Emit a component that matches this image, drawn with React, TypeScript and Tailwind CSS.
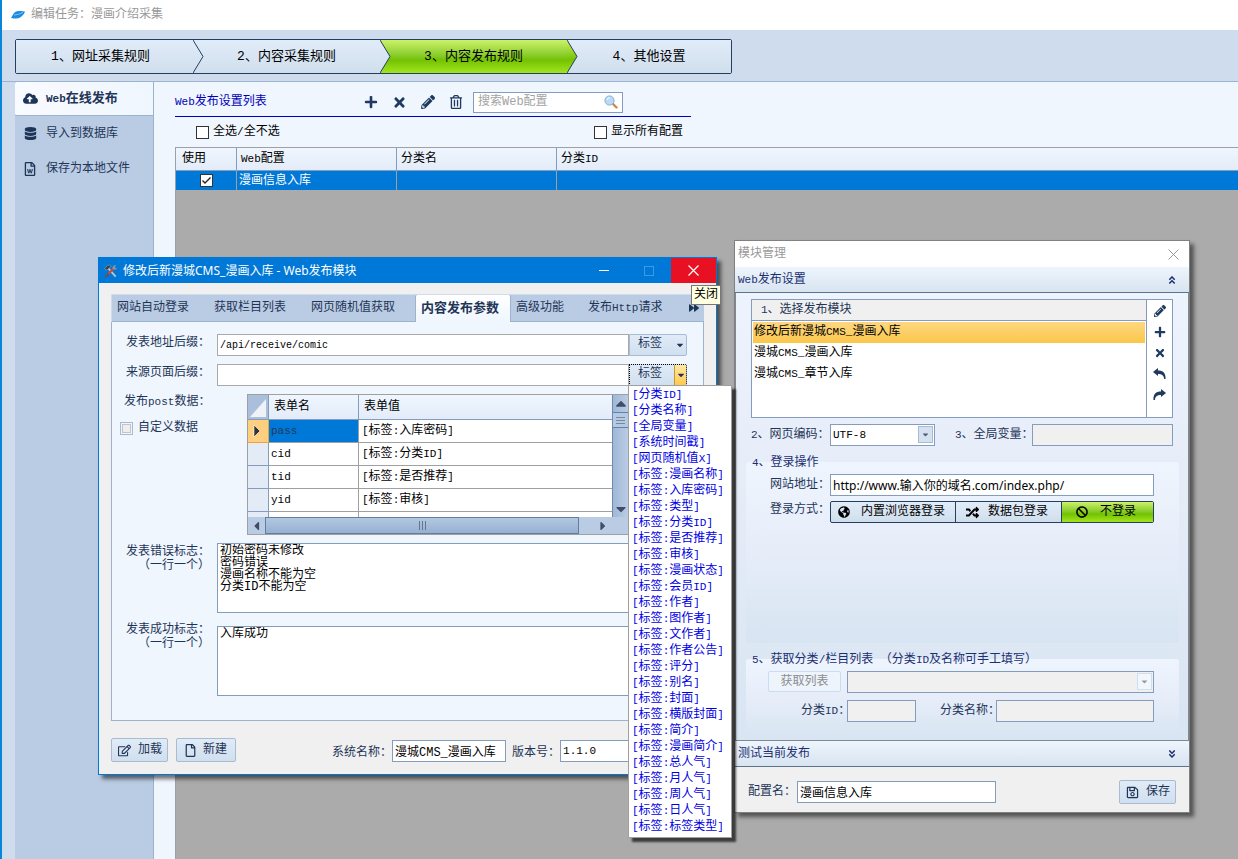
import { useState } from 'react';
import type { ReactNode } from 'react';
import { clsx } from 'clsx';
import {
    FaAngleDoubleDown,
    FaAngleDoubleUp,
    FaBan,
    FaCaretDown,
    FaCaretLeft,
    FaCaretRight,
    FaCaretUp,
    FaCloudUploadAlt,
    FaDatabase,
    FaForward,
    FaGlobeAmericas,
    FaPencilAlt,
    FaPlus,
    FaRandom,
    FaRegEdit,
    FaRegFile,
    FaRegFileWord,
    FaRegSave,
    FaRegTrashAlt,
    FaTimes,
} from 'react-icons/fa';

const steps = ['1、网址采集规则', '2、内容采集规则', '3、内容发布规则', '4、其他设置'];
const stepWidths = ['w-[177px] pr-2', 'w-[187px]', 'w-[187px]', 'flex-1'];

const sideItems = [
    { label: 'Web在线发布', icon: <FaCloudUploadAlt className="size-[15px]" /> },
    { label: '导入到数据库', icon: <FaDatabase className="size-[13px]" /> },
    { label: '保存为本地文件', icon: <FaRegFileWord className="size-[14px]" /> },
];

const tabs = [
    { label: '网站自动登录', width: 'w-[97px]' },
    { label: '获取栏目列表', width: 'w-[97px]' },
    { label: '网页随机值获取', width: 'w-[109px]' },
    { label: '内容发布参数', width: 'w-[96px]' },
    { label: '高级功能', width: 'w-[72px]' },
    { label: '发布Http请求', width: 'w-[90px]' },
];

const postData = [
    { name: 'pass', value: '[标签:入库密码]' },
    { name: 'cid', value: '[标签:分类ID]' },
    { name: 'tid', value: '[标签:是否推荐]' },
    { name: 'yid', value: '[标签:审核]' },
];

const tagMenu = [
    '[分类ID]', '[分类名称]', '[全局变量]', '[系统时间戳]', '[网页随机值X]', '[标签:漫画名称]', '[标签:入库密码]',
    '[标签:类型]', '[标签:分类ID]', '[标签:是否推荐]', '[标签:审核]', '[标签:漫画状态]', '[标签:会员ID]',
    '[标签:作者]', '[标签:图作者]', '[标签:文作者]', '[标签:作者公告]', '[标签:评分]', '[标签:别名]', '[标签:封面]',
    '[标签:横版封面]', '[标签:简介]', '[标签:漫画简介]', '[标签:总人气]', '[标签:月人气]', '[标签:周人气]',
    '[标签:日人气]', '[标签:标签类型]',
];

const modules = ['修改后新漫城CMS_漫画入库', '漫城CMS_漫画入库', '漫城CMS_章节入库'];

const fieldClass = 'h-[22px] min-w-0 border border-[#859dbd] bg-white px-[2px] text-black outline-none disabled:bg-[#f0f0f0]';
const areaClass = 'h-[70px] min-w-0 flex-1 resize-none border border-[#859dbd] bg-white px-[2px] pt-px leading-3 text-black outline-none';
const buttonClass =
    'flex items-center rounded-[2px] border border-[#a9bad5] bg-linear-to-b from-[#e1ebf8] to-[#d0dfee] text-[#1f3557]';

// Half-width characters take about half of a Chinese character's width.
function T({ children }: { children: string }) {
    return (
        <>
            {children.split(/([\x20-\x7e]+)/).map((part, i) =>
                i % 2 ? (
                    <span key={i} className="font-['Liberation_Mono',monospace] text-[11px] whitespace-pre">
                        {part}
                    </span>
                ) : (
                    part
                ),
            )}
        </>
    );
}

function CheckBox({ id, checked = false, label }: { id: string; checked?: boolean; label: string }) {
    const [on, setOn] = useState(checked);

    return (
        <span className="relative flex size-[13px] shrink-0">
            <input
                id={id}
                type="checkbox"
                aria-label={label}
                checked={on}
                onChange={() => setOn(!on)}
                className="size-[13px] appearance-none border border-[#333] bg-white"
            />
            {on ? (
                <svg viewBox="0 0 13 13" className="pointer-events-none absolute top-0 left-0 size-[13px]">
                    <path d="M2.500 6.500L5 9L10.500 3.500" stroke="#222" strokeWidth="1.400" fill="none" />
                </svg>
            ) : null}
        </span>
    );
}

function StepBar() {
    const current = 2;

    return (
        <nav className="mt-[9px] ml-[13px] flex h-[35px] w-[717px] max-w-full rounded-[2px] border border-[#243f60] text-[13px] text-black">
            {steps.map((step, i) => (
                <button
                    key={step}
                    className={clsx(
                        'relative',
                        stepWidths[i],
                        i === current
                            ? 'bg-linear-to-b from-[#cdf168] via-[#73c200] via-60% to-[#a2e41d]'
                            : 'bg-linear-to-b from-[#e1ecf9] to-[#d0deec]',
                    )}
                >
                    {step}
                    {i < steps.length - 1 ? (
                        <svg viewBox="0 0 11 33" className="absolute top-0 left-full z-10 h-[33px] w-[11px]">
                            <defs>
                                <linearGradient id={`step${i}`} x1="0" y1="0" x2="0" y2="1">
                                    <stop offset="0" stopColor={i === current ? '#cdf168' : '#e1ecf9'} />
                                    <stop offset="0.6" stopColor={i === current ? '#73c200' : '#d7e3f1'} />
                                    <stop offset="1" stopColor={i === current ? '#a2e41d' : '#d0deec'} />
                                </linearGradient>
                            </defs>
                            <path d="M0 0L10 16.5L0 33" fill={`url(#step${i})`} stroke="#243f60" />
                        </svg>
                    ) : null}
                </button>
            ))}
        </nav>
    );
}

function Sidebar() {
    return (
        <aside className="ml-[13px] w-[139px] shrink-0 border-r border-[#9db2cf] bg-[#bacce4] text-[#1f3557]">
            {sideItems.map((item, i) => (
                <button
                    key={item.label}
                    className={clsx(
                        'flex w-full items-center text-left',
                        i === 0
                            ? 'h-[34px] rounded-l-[2px] border-b border-[#9db2cf] bg-linear-to-r from-[#f8fbff] to-[#eff6fe] text-[13px] font-bold'
                            : 'h-[35px]',
                    )}
                >
                    <span className="flex w-[31px] justify-center pr-[1px]">{item.icon}</span>
                    <span>
                        <T>{item.label}</T>
                    </span>
                </button>
            ))}
        </aside>
    );
}

function ConfigList() {
    return (
        <section className="flex min-w-0 flex-1 flex-col bg-[#eff6fe] pl-[21px] text-black">
            <div className="flex h-[35px] w-[516px] items-center border-b border-[#0000cd] pt-[6px]">
                <h2 className="w-[189px] text-[#0000b8]">
                    <T>Web发布设置列表</T>
                </h2>
                <div className="flex w-[109px] items-center gap-[14px] text-[#1f3a60]">
                    <button aria-label="添加"><FaPlus className="size-[14px]" /></button>
                    <button aria-label="移除"><FaTimes className="size-[15px]" /></button>
                    <button aria-label="编辑"><FaPencilAlt className="size-[14px]" /></button>
                    <button aria-label="删除"><FaRegTrashAlt className="size-[14px]" /></button>
                </div>
                <div className="flex h-[21px] w-[150px] items-center border border-[#859dbd] bg-white pr-1">
                    <input aria-label="搜索Web配置" placeholder="搜索Web配置" className="min-w-0 flex-1 px-1 outline-none placeholder:text-[#a3a3a3]" />
                    <svg viewBox="0 0 14 14" className="size-[14px]">
                        <path d="M8.5 8.5L12.5 12.5" stroke="#c98a4b" strokeWidth="2.4" strokeLinecap="round" />
                        <circle cx="5.5" cy="5.5" r="4.6" fill="#b9d9f7" stroke="#86add6" />
                        <path d="M3 5a3 3 0 0 1 3-2.4" stroke="#fff" fill="none" />
                    </svg>
                </div>
            </div>
            <div className="flex h-[30px] w-[516px] items-center pr-2 pl-[21px]">
                <CheckBox id="all" label="全选/全不选" />
                <label htmlFor="all" className="ml-1 flex-1"><T>全选/全不选</T></label>
                <CheckBox id="show-all" label="显示所有配置" />
                <label htmlFor="show-all" className="ml-1">显示所有配置</label>
            </div>
            <div className="flex-1 border-t border-l border-[#a0a0a0] bg-[#ababab]">
                <table className="w-full table-fixed border-separate border-spacing-0 text-left">
                    <thead>
                        <tr className="h-[23px] bg-linear-to-b from-[#eff6fe] to-[#e2ebf8]">
                            <th className="w-[61px] border-r border-b border-[#859dbd] pl-[6px] font-normal">使用</th>
                            <th className="w-[160px] border-r border-b border-[#859dbd] pl-[4px] font-normal"><T>Web配置</T></th>
                            <th className="w-[160px] border-r border-b border-[#859dbd] pl-[4px] font-normal">分类名</th>
                            <th className="border-b border-[#859dbd] pl-[4px] font-normal"><T>分类ID</T></th>
                        </tr>
                    </thead>
                    <tbody>
                        <tr className="h-[19px] bg-[#0078d7] text-white">
                            <td className="border-r border-[#a0a0a0] pl-6"><CheckBox id="use" checked label="使用" /></td>
                            <td className="border-r border-[#a0a0a0] pl-[2px]">漫画信息入库</td>
                            <td className="border-r border-[#a0a0a0]" />
                            <td />
                        </tr>
                    </tbody>
                </table>
            </div>
        </section>
    );
}

function FieldRow({ label, note, children }: { label: ReactNode; note?: string; children: ReactNode }) {
    return (
        <div className="flex">
            <div className="w-[105px] shrink-0 pt-[2px] pr-[7px] text-right leading-[14px]">
                <div>{label}</div>
                {note ? <div>{note}</div> : null}
            </div>
            {children}
        </div>
    );
}

function TagButton({ open = false }: { open?: boolean }) {
    return (
        <button
            aria-expanded={open}
            className={clsx(
                'flex h-[22px] w-[58px] items-stretch rounded-r-[2px] border bg-linear-to-b from-[#e1ebf8] to-[#d0dfee] text-left',
                open ? 'border-dotted border-black' : 'border-[#a9bad5]',
            )}
        >
            <span className="flex-1 pl-2 leading-[18px]">标签</span>
            <span className={clsx('flex w-3 items-center justify-center', open && 'border-l border-[#c99a2e] bg-linear-to-b from-[#ffe9a0] to-[#ffc84a]')}>
                <FaCaretDown className="size-[10px]" />
            </span>
        </button>
    );
}

function PostDataGrid() {
    return (
        <div className="ml-[30px] flex h-[141px] w-[382px] flex-col border border-[#a0a0a0] bg-white text-black">
            <div className="flex min-h-0 flex-1">
                <div className="flex-1 overflow-hidden">
                    <table className="w-full table-fixed border-separate border-spacing-0 text-left">
                        <thead>
                            <tr className="h-[25px] bg-linear-to-b from-[#eff6fe] to-[#e2ebf8]">
                                <th className="w-[21px] border-r border-b border-[#859dbd] bg-[#a9bfdc] p-[2px]">
                                    <svg viewBox="0 0 16 20" className="h-5 w-4">
                                        <path d="M16 2V20H0Z" fill="#eff3f8" />
                                    </svg>
                                </th>
                                <th className="w-[90px] border-r border-b border-[#859dbd] pl-[5px] font-normal">表单名</th>
                                <th className="border-b border-[#859dbd] pl-[5px] font-normal">表单值</th>
                            </tr>
                        </thead>
                        <tbody>
                            {postData.map((row, i) => (
                                <tr key={row.name} className="h-[23px]">
                                    <td className={clsx('border-r border-b pl-1', i === 0 ? 'border-[#f2a13a] bg-[#ffcf80]' : 'border-[#859dbd] bg-[#e2ebf6]')}>
                                        {i === 0 ? (
                                            <svg viewBox="0 0 8 12" className="ml-px h-3 w-2">
                                                <path d="M1 0L7 6L1 12Z" fill="#333" stroke="#fff" strokeWidth=".6" />
                                            </svg>
                                        ) : null}
                                    </td>
                                    <td className={clsx('border-r border-b border-[#a0a0a0] pl-[2px]', i === 0 && 'bg-[#0078d7] text-[#1f3a5c]')}>
                                        <T>{row.name}</T>
                                    </td>
                                    <td className="border-b border-[#a0a0a0] pl-[3px]"><T>{row.value}</T></td>
                                </tr>
                            ))}
                            <tr className="h-[23px]">
                                <td className="border-r border-[#859dbd] bg-[#e2ebf6]" />
                                <td className="border-r border-[#a0a0a0]" />
                                <td />
                            </tr>
                        </tbody>
                    </table>
                </div>
                <div className="flex w-4 flex-col items-center border-l border-[#7089ae] bg-linear-to-r from-[#9fb8d6] to-[#bacce4] text-[#3f4d6b]">
                    <FaCaretUp className="h-[17px] w-3" />
                    <div className="flex h-4 w-full flex-col justify-center gap-[2px] border-y border-[#6480a8] bg-[#b4c9e3] px-[3px]">
                        <i className="h-px bg-[#7c8797]" />
                        <i className="h-px bg-[#7c8797]" />
                        <i className="h-px bg-[#7c8797]" />
                    </div>
                    <FaCaretDown className="mt-auto h-4 w-3" />
                </div>
            </div>
            <div className="flex h-[17px] items-center bg-[#bacce4] text-[#3f4d6b]">
                <FaCaretLeft className="h-[14px] w-[17px]" />
                <div className="flex h-[17px] w-[314px] items-center justify-center gap-[2px] border border-[#647ea3] bg-linear-to-b from-[#b2c8e2] to-[#98b1d1]">
                    <i className="h-[9px] w-px bg-[#66758c]" />
                    <i className="h-[9px] w-px bg-[#66758c]" />
                    <i className="h-[9px] w-px bg-[#66758c]" />
                </div>
                <FaCaretRight className="ml-[18px] h-[14px] w-3" />
            </div>
        </div>
    );
}

function PublishDialog() {
    return (
        <section className="absolute top-[257px] left-[98px] w-[619px] border border-[#0078d7] bg-[#f0f0f0] text-[#1f3557] shadow-[4px_4px_4px_0_rgba(0,0,0,0.55)]">
            <header className="flex h-[25px] items-center bg-[#0078d7] pl-[5px] font-['Noto_Sans','Noto_Sans_CJK_SC',sans-serif] text-white">
                <svg viewBox="0 0 15 15" className="mr-[5px] size-[14px]">
                    <path d="M4 4L12.500 13.500" stroke="#c0c6cc" strokeWidth="2" />
                    <path d="M0.500 5L4 1.500Q6 .5 8 2L5.500 4.500L3 6.500Z" fill="#39424c" stroke="#9ca7b0" strokeWidth=".6" />
                    <path d="M2 13.500L11 4" stroke="#d5452f" strokeWidth="2.200" />
                    <path d="M9 5Q9 1 13 1L11.500 3.500L14 5Q12 7 9 5Z" fill="#8c969f" />
                    <path d="M1.500 14L5 10.500" stroke="#4d5660" strokeWidth="2" />
                </svg>
                <h1 className="flex-1">修改后新漫城CMS_漫画入库 - Web发布模块</h1>
                <button aria-label="最小化" className="flex h-[25px] w-[45px] items-center justify-center">
                    <i className="h-px w-[10px] bg-white" />
                </button>
                <button aria-label="最大化" disabled className="flex h-[25px] w-[45px] items-center justify-center">
                    <i className="size-[10px] border border-[#3f9ae6]" />
                </button>
                <button aria-label="关闭" className="flex h-[25px] w-[45px] items-center justify-center bg-[#e81123]">
                    <svg viewBox="0 0 11 11" className="size-[11px]">
                        <path d="M.5 .5L10.500 10.500M10.500 .5L.5 10.500" stroke="#fff" strokeWidth="1.200" />
                    </svg>
                </button>
            </header>
            <div className="px-3 pt-[11px] pb-3">
                <div role="tablist" className="flex h-7 items-stretch border-t border-l border-[#cfdcee] bg-[#bacce4]">
                    {tabs.map((tab, i) => (
                        <button
                            key={tab.label}
                            role="tab"
                            aria-selected={i === 3}
                            className={clsx(
                                'shrink-0 pl-[5px] text-left',
                                tab.width,
                                i === 3
                                    ? 'rounded-t-[2px] border-x border-[#9db2cf] bg-linear-to-b from-white to-[#eff6fe] text-[13px] font-bold'
                                    : 'border-b border-[#9db2cf]',
                            )}
                        >
                            <T>{tab.label}</T>
                        </button>
                    ))}
                    <button aria-label="更多" className="flex flex-1 items-center justify-end border-b border-[#9db2cf] pr-[5px]">
                        <FaForward className="size-[10px]" />
                    </button>
                </div>
                <div className="flex flex-col gap-2 border-x border-b border-[#9db2cf] bg-[#eff6fe] pt-3 pr-4 pb-6">
                    <FieldRow label={<label htmlFor="url-suffix">发表地址后缀：</label>}>
                        <input id="url-suffix" defaultValue="/api/receive/comic" className="h-[22px] min-w-0 flex-1 border border-[#a9a9a9] bg-white px-[2px] font-['Liberation_Mono',monospace] text-[10px] text-black outline-none" />
                        <TagButton />
                    </FieldRow>
                    <FieldRow label={<label htmlFor="ref-suffix">来源页面后缀：</label>}>
                        <input id="ref-suffix" className="h-[22px] min-w-0 flex-1 border border-[#a9a9a9] bg-white px-[2px] text-black outline-none" />
                        <TagButton open />
                    </FieldRow>
                    <div className="flex">
                        <div className="w-[105px] shrink-0 pt-px pl-2 leading-[14px]">
                            <div className="pl-1 whitespace-nowrap"><T>发布post数据：</T></div>
                            <div className="mt-3 flex items-center gap-[5px]">
                                <input id="custom" type="checkbox" className="size-[13px] appearance-none border border-[#a9bad5] bg-[#eee] shadow-[inset_0_0_0_1px_#eff6fe,inset_0_0_0_2px_#c4c4c4]" />
                                <label htmlFor="custom">自定义数据</label>
                            </div>
                        </div>
                        <PostDataGrid />
                    </div>
                    <FieldRow label={<label htmlFor="error-flags">发表错误标志：</label>} note="（一行一个）">
                        <textarea
                            id="error-flags"
                            defaultValue={'初始密码未修改\n密码错误\n漫画名称不能为空\n分类ID不能为空'}
                            className={areaClass}
                        />
                    </FieldRow>
                    <FieldRow label={<label htmlFor="ok-flags">发表成功标志：</label>} note="（一行一个）">
                        <textarea id="ok-flags" defaultValue="入库成功" className={clsx(areaClass, 'mt-[5px]')} />
                    </FieldRow>
                </div>
                <footer className="flex items-end pt-[17px]">
                    <button className={clsx(buttonClass, 'h-6 w-[57px] gap-[7px] pl-[6px]')}>
                        <FaRegEdit className="size-[13px]" />
                        加载
                    </button>
                    <button className={clsx(buttonClass, 'mr-[96px] ml-2 h-6 w-[60px] gap-[6px] pl-[7px]')}>
                        <FaRegFile className="size-[13px]" />
                        新建
                    </button>
                    <label htmlFor="sys-name">系统名称：</label>
                    <input id="sys-name" defaultValue="漫城CMS_漫画入库" className={clsx(fieldClass, 'mr-[6px] w-[114px]')} />
                    <label htmlFor="version">版本号：</label>
                    <input id="version" defaultValue="1.1.0" className="h-[22px] min-w-0 flex-1 border border-[#859dbd] bg-white px-[2px] font-['Liberation_Mono',monospace] text-[11px] text-black outline-none" />
                </footer>
            </div>
            <div role="tooltip" className="absolute top-[27px] left-[592px] border border-[#777] bg-[#ffffe1] px-[2px] whitespace-nowrap text-black">
                关闭
            </div>
        </section>
    );
}

function DropArrow({ disabled = false }: { disabled?: boolean }) {
    return (
        <span
            className={clsx(
                'pointer-events-none absolute top-[2px] right-[2px] flex h-[17px] w-[15px] items-center justify-center border',
                disabled ? 'border-[#d0dfee] bg-[#f2f7fd] text-[#999]' : 'border-[#a9bad5] bg-[#d5e1f0] text-[#4b5d78]',
            )}
        >
            <FaCaretDown className="size-[9px]" />
        </span>
    );
}

function ManagerWindow() {
    const toolClass = 'flex h-[21px] items-center justify-center';

    return (
        <section className="absolute top-[240px] left-[734px] w-[456px] border border-[#808080] bg-[#f0f0f0] text-[#1f3557] shadow-[4px_4px_4px_0_rgba(0,0,0,0.5)]">
            <header className="flex h-[26px] items-center bg-white pr-[10px] pl-[3px] text-[#999]">
                <h1 className="flex-1">模块管理</h1>
                <button aria-label="关闭窗口">
                    <svg viewBox="0 0 11 11" className="size-[11px]">
                        <path d="M.5 .5L10.500 10.500M10.500 .5L.5 10.500" stroke="#999" />
                    </svg>
                </button>
            </header>
            <button className="flex h-[26px] w-full items-center justify-between border-b border-[#5d738c] bg-linear-to-b from-[#eef5fd] to-[#d8e4f1] pr-3 pl-[3px] text-[#1c2f70]">
                <span><T>Web发布设置</T></span>
                <FaAngleDoubleUp className="size-[10px]" />
            </button>
            <div className="border-x border-b border-[#808890] bg-linear-to-b from-[#edf4fd] via-[#e5ecf8] via-45% to-[#d8e5f2] pt-[6px]">
                <div className="mx-[15px] flex h-[119px] border border-[#859dbd] bg-white">
                    <div className="flex-1">
                        <div className="h-[21px] border-b border-[#859dbd] bg-[#f0f0f0] pl-[9px] leading-5"><T>1、选择发布模块</T></div>
                        <ul className="p-px text-black">
                            {modules.map((name, i) => (
                                <li key={name} className={clsx('h-[21px] pl-[1px] leading-5', i === 0 && 'bg-linear-to-b from-[#fdd77f] to-[#fbc648]')}>
                                    <T>{name}</T>
                                </li>
                            ))}
                        </ul>
                    </div>
                    <div className="flex w-[26px] flex-col border-l border-[#859dbd] text-[#1f3a60]">
                        <button aria-label="编辑模块" className={toolClass}><FaPencilAlt className="size-[12px]" /></button>
                        <button aria-label="添加模块" className={toolClass}><FaPlus className="size-[12px]" /></button>
                        <button aria-label="移除模块" className={toolClass}><FaTimes className="size-3" /></button>
                        <button aria-label="导入模块" className={toolClass}>
                            <svg viewBox="0 0 13 11" className="h-[11px] w-[13px]" fill="currentColor">
                                <path d="M0 4L5 0V2.500C10 2.500 13 5 12.500 11H11C11 7.500 9 6 5 6V8Z" />
                            </svg>
                        </button>
                        <button aria-label="导出模块" className={toolClass}>
                            <svg viewBox="0 0 13 11" className="h-[11px] w-[13px]" fill="currentColor">
                                <path d="M13 4L8 0V2.500C3 2.500 0 5 .5 11H2C2 7.500 4 6 8 6V8Z" />
                            </svg>
                        </button>
                    </div>
                </div>
                <div className="mx-[15px] mt-[6px] flex items-center">
                    <label htmlFor="encoding" className="w-[79px] whitespace-nowrap"><T>2、网页编码：</T></label>
                    <span className="relative">
                        <select id="encoding" className={clsx(fieldClass, "block w-[105px] appearance-none font-['Liberation_Mono',monospace] text-[11px]")}>
                            <option>UTF-8</option>
                        </select>
                        <DropArrow />
                    </span>
                    <label htmlFor="global-var" className="ml-[20px] w-[77px] whitespace-nowrap"><T>3、全局变量：</T></label>
                    <input id="global-var" disabled className={clsx(fieldClass, 'flex-1')} />
                </div>
                <div className="mt-4 mr-[9px] ml-[10px] rounded-[3px] bg-linear-to-b from-[#eef5fe] via-[#e6edf9] to-[#d7e4f1] pr-[25px] pb-[120px] pl-6">
                    <h3 className="-ml-[18px] h-3 leading-[2px] text-[#1c2f70]"><T>4、登录操作</T></h3>
                    <div className="flex items-center">
                        <label htmlFor="site" className="w-[60px]">网站地址：</label>
                        <input id="site" defaultValue="http://www.输入你的域名.com/index.php/" className={clsx(fieldClass, "flex-1 font-['Noto_Sans','Noto_Sans_CJK_SC',sans-serif]")} />
                    </div>
                    <div className="mt-[5px] flex items-center">
                        <span className="w-[60px] pb-1">登录方式：</span>
                        <div className="flex h-[22px] flex-1 rounded-[2px] border border-[#243f60] bg-linear-to-b from-[#e1ecf9] to-[#d0deec] text-black">
                            <button className="flex w-[124px] items-center gap-[11px] pl-[7px]"><FaGlobeAmericas />内置浏览器登录</button>
                            <button className="flex w-[106px] items-center gap-[9px] border-l border-[#243f60] pl-[10px]"><FaRandom className="size-[13px]" />数据包登录</button>
                            <button className="flex flex-1 items-center gap-3 border-l border-[#243f60] bg-linear-to-b from-[#cdf168] via-[#73c200] via-60% to-[#a2e41d] pl-[14px]"><FaBan />不登录</button>
                        </div>
                    </div>
                </div>
                <div className="mt-4 mr-[9px] ml-[10px] rounded-[3px] bg-linear-to-b from-[#eef5fe] via-[#e6edf9] to-[#d7e4f1] pr-[25px] pb-[18px] pl-[22px]">
                    <h3 className="-ml-4 h-3 leading-[2px] whitespace-nowrap text-[#1c2f70]"><T>5、获取分类/栏目列表 （分类ID及名称可手工填写）</T></h3>
                    <div className="flex">
                        <button disabled className="h-[21px] w-[73px] rounded-[2px] border border-[#c9dcf0] bg-[#edf4fc] leading-[18px] text-[#8d8d8d]">获取列表</button>
                        <span className="relative ml-[6px] flex-1">
                            <select aria-label="分类列表" disabled className={clsx(fieldClass, 'block w-full appearance-none')} />
                            <DropArrow disabled />
                        </span>
                    </div>
                    <div className="mt-[7px] flex items-center">
                        <label htmlFor="cat-id" className="w-[79px] pl-[33px] whitespace-nowrap"><T>分类ID：</T></label>
                        <input id="cat-id" disabled className={clsx(fieldClass, 'w-[69px]')} />
                        <label htmlFor="cat-name" className="ml-6 w-[56px] whitespace-nowrap">分类名称：</label>
                        <input id="cat-name" disabled className={clsx(fieldClass, 'flex-1')} />
                    </div>
                </div>
            </div>
            <button className="flex h-[26px] w-full items-center justify-between border-b border-[#5d738c] bg-linear-to-b from-[#eef5fd] to-[#d8e4f1] pr-3 pl-[3px] text-[#1c2f70]">
                测试当前发布
                <FaAngleDoubleDown className="size-[10px]" />
            </button>
            <footer className="flex items-center pt-[13px] pr-[13px] pb-2 pl-[13px]">
                <label htmlFor="config-name" className="w-[49px] whitespace-nowrap">配置名：</label>
                <input id="config-name" defaultValue="漫画信息入库" className={clsx(fieldClass, 'w-[199px]')} />
                <button className={clsx(buttonClass, 'ml-auto h-6 w-[57px] gap-[7px] pl-[6px]')}>
                    <FaRegSave className="size-[13px]" />
                    保存
                </button>
            </footer>
        </section>
    );
}

function TagMenu() {
    return (
        <div role="menu" className="absolute top-[385px] left-[628px] flex w-[104px] flex-col border border-[#a0a0a0] bg-white pt-px pb-[2px] pl-[3px] text-[#0000e6] shadow-[4px_4px_2px_0_rgba(0,0,0,0.65)]">
            {tagMenu.map((tag) => (
                <button key={tag} role="menuitem" className="h-4 text-left leading-4 whitespace-nowrap">
                    <T>{tag}</T>
                </button>
            ))}
        </div>
    );
}

export default function App() {
    return (
        <div className="relative flex h-screen flex-col overflow-hidden border-l-2 border-[#0a86d8] bg-[#cfdcee] font-['Liberation_Mono','Noto_Sans_CJK_SC',monospace] text-[12px] leading-[18px]">
            <header className="flex h-[30px] shrink-0 items-center gap-[6px] bg-white pl-[9px] text-[#999]">
                <svg viewBox="0 0 14 10" className="h-[10px] w-[14px]">
                    <path d="M0 8L3 3Q5 .5 9 1L14 1.500Q13.500 4.500 10 7Q7 9 3 8.500Z" fill="#1c8be0" />
                    <path d="M3 5Q7 5 12 2.500" stroke="#7cc4f7" fill="none" />
                </svg>
                编辑任务：漫画介绍采集
            </header>
            <StepBar />
            <div className="mt-[7px] flex min-h-0 flex-1 border-t border-[#9db2cf]">
                <Sidebar />
                <ConfigList />
            </div>
            {/* windows float over the editor, offsets count from the left screen edge */}
            <div className="absolute top-0 -left-[2px]">
                <PublishDialog />
                <ManagerWindow />
                <TagMenu />
            </div>
        </div>
    );
}
